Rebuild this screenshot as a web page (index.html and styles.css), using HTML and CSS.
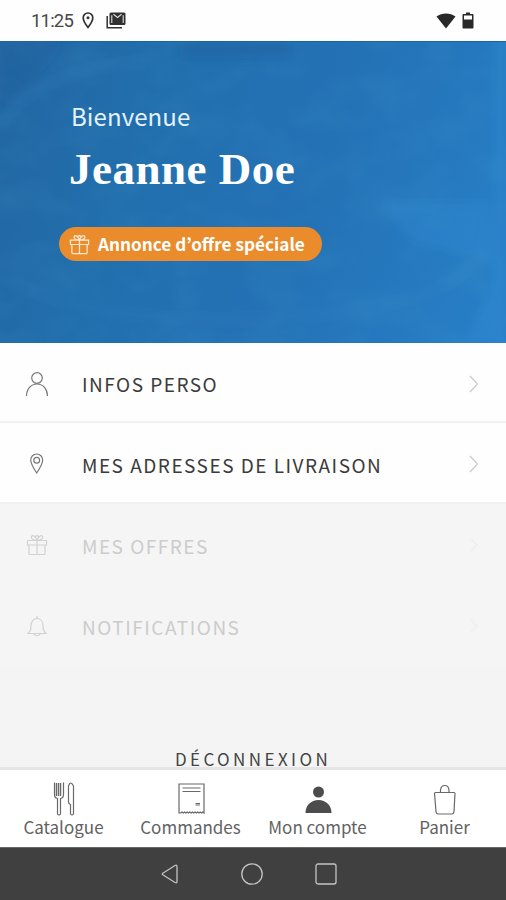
FILE: index.html
```html
<!DOCTYPE html>
<html lang="fr">
<head>
<meta charset="utf-8">
<meta name="viewport" content="width=device-width, initial-scale=1">
<title>Mon compte</title>
<link rel="stylesheet" href="styles.css">
</head>
<body>
<svg class="defs" aria-hidden="true">
  <symbol id="gift" viewBox="0 0 22 22"><path d="M1.500 6.500h19v4.500h-19zM3 11v8.500q0 1 1 1h14q1 0 1-1V11M11 6.500v14M11 6.500C7 6.500 4.500 4.500 5.500 2.500S10 2.500 11 6.500c1-4 4.500-6 5.500-4S15 6.500 11 6.500M8.500 3l2.500-1.500L13.500 3"/></symbol>
  <symbol id="chevron" viewBox="0 0 10 18"><path d="M1 1l7.500 8L1 17"/></symbol>
</svg>
<div class="phone">
  <header class="status">
    <span class="clock">11:25</span>
    <svg class="s-pin" viewBox="0 0 12 17"><path d="M6 1a4.800 4.800 0 0 0-4.800 4.800C1.200 9.400 6 15.500 6 15.500s4.800-6.100 4.800-9.700A4.800 4.800 0 0 0 6 1z"/><circle cx="6" cy="5.800" r="1.500"/></svg>
    <svg class="s-mail" viewBox="0 0 20 17"><path class="line" d="M1.200 4v11.700H16"/><rect x="3.500" y=".5" width="16" height="12.500" rx="1.500"/><path class="cut" d="M5.800 11V3.200M17.200 11V3.200M7.500 2.300l4 3.200 4-3.200"/></svg>
    <svg class="s-wifi" viewBox="0 0 20 16"><path d="M.5 3.500C6-.5 14-.5 19.500 3.500L10 15.500z"/></svg>
    <svg class="s-battery" viewBox="0 0 12 17"><path d="M4 .5h4V2h2.500q1 0 1 1v12.500q0 1-1 1h-9q-1 0-1-1V3q0-1 1-1H4z"/><path class="cut" d="M2 3.500h8V7.500H2z"/></svg>
  </header>

  <section class="hero">
    <svg class="hero-art" viewBox="0 0 506 302" preserveAspectRatio="none" aria-hidden="true">
      <defs>
        <filter id="soft" x="-20%" y="-20%" width="140%" height="140%"><feGaussianBlur stdDeviation="5"/></filter>
        <filter id="grain" x="0" y="0" width="100%" height="100%"><feTurbulence type="fractalNoise" baseFrequency=".02 .028" numOctaves="3" seed="8"/><feColorMatrix values="0 0 0 0 .06  0 0 0 0 .34  0 0 0 0 .58  1.500 0 0 0 -.6"/></filter>
      </defs>
      <rect class="grain" width="506" height="302" filter="url(#grain)"/>
      <g filter="url(#soft)">
        <path class="dark" d="M0 0h65Q45 35 0 65zM180 0h110v16H180z"/>
        <path class="rim" d="M0 85Q35 25 150 20M0 235Q100 290 300 275T490 175"/>
        <path class="glow" d="M380 160h110v60l-80-20zM494 0h12v302h-42l30-60z"/>
      </g>
    </svg>
    <div class="hero-text">
      <p class="welcome">Bienvenue</p>
      <h1 class="name">Jeanne Doe</h1>
      <div class="offer"><svg class="offer-icon"><use href="#gift"/></svg><span>Annonce d’offre spéciale</span></div>
    </div>
  </section>

  <nav class="menu">
    <a class="row">
      <svg class="row-icon" viewBox="0 0 24 26"><circle cx="12" cy="7" r="5.300"/><path d="M1.500 25c0-7 4.500-12 10.500-12s10.500 5 10.500 12"/></svg>
      <span class="label">INFOS PERSO</span><svg class="chevron"><use href="#chevron"/></svg>
    </a>
    <a class="row">
      <svg class="row-icon" viewBox="0 0 24 26"><path d="M11.700 3a6 6 0 0 0-6 6c0 4 6 13 6 13s6-9 6-13a6 6 0 0 0-6-6z"/><circle cx="11.700" cy="9.200" r="2.900"/></svg>
      <span class="label">MES ADRESSES DE LIVRAISON</span><svg class="chevron"><use href="#chevron"/></svg>
    </a>
    <a class="row disabled">
      <svg class="row-icon gift"><use href="#gift"/></svg>
      <span class="label">MES OFFRES</span><svg class="chevron"><use href="#chevron"/></svg>
    </a>
    <a class="row disabled">
      <svg class="row-icon" viewBox="0 0 24 26"><path d="M12 3v2.500M3 20.500c2.500-2 3-4 3-7.500C6 8.500 8.500 5.500 12 5.500s6 3 6 7.500c0 3.500.5 5.500 3 7.500zM9 20.500c.5 3 5.500 3 6 0"/></svg>
      <span class="label">NOTIFICATIONS</span><svg class="chevron"><use href="#chevron"/></svg>
    </a>
  </nav>
  <div class="logout"><span>DÉCONNEXION</span></div>

  <nav class="tabs">
    <a class="tab"><svg viewBox="0 0 28 36"><path class="tines" d="M6.500 2v13M10.500 2v13"/><path d="M4.500 1.500v12q0 3.500 3 4V33q1.500 2 3 0V17.500q3-.5 3-4v-12M8.500 2v13M18.500 5q2-6 5 0v28q-1.500 2-3 0V23.500q-2-.5-2-3z"/></svg><span>Catalogue</span></a>
    <a class="tab"><svg viewBox="0 0 28 36"><path d="M2 3h25v29l-1.200-1-1.300 1-1.300-1-1.300 1-1.300-1-1.300 1-1.300-1-1.300 1-1.300-1-1.300 1-1.300-1-1.300 1-1.300-1-1.300 1-1.300-1-1.300 1-1.300-1-1.300 1L2 32zM5.500 7h18M5.500 10.500h18M18.500 22.500h4.500M18.500 24h4.500"/></svg><span>Commandes</span></a>
    <a class="tab active"><svg viewBox="0 0 28 36"><circle cx="14.500" cy="11" r="5.500"/><path d="M1.500 32c0-7.500 5.500-13 13-13s13 5.500 13 13z"/></svg><span>Mon compte</span></a>
    <a class="tab"><svg viewBox="0 0 28 36"><path d="M4.500 11.500h18.500q1 0 1 1l-1 18q-.2 2.500-2.500 2.500H7.500q-2.300 0-2.500-2.500L3.500 12.500q0-1 1-1zM9.500 11.500V9q.5-4.500 4.300-4.500T18 9v2.500"/></svg><span>Panier</span></a>
  </nav>
  <footer class="system">
    <svg viewBox="0 0 24 24"><path d="M4.800 11.200L17 3.500q2-1 2 1v15q0 2-2 1L4.800 12.800q-1.200-.8 0-1.600z"/></svg>
    <svg viewBox="0 0 24 24"><circle cx="12" cy="12" r="10.200"/></svg>
    <svg viewBox="0 0 24 24"><rect x="2" y="2" width="20" height="20" rx="2"/></svg>
  </footer>
</div>
</body>
</html>
```

FILE: styles.css
```css
* { box-sizing: border-box; }
body { margin: 0; background: #f4f4f4; font-family: "Noto Sans CJK KR", "Noto Sans", sans-serif; }
p, h1 { margin: 0; }
svg { display: block; flex: none; fill: none; }
.defs { position: absolute; width: 0; height: 0; }
.phone { width: 506px; height: 900px; display: flex; flex-direction: column; overflow: hidden; }

.status { height: 41px; flex: none; display: flex; align-items: center; padding: 0 32px 0 31px; background: #fefefe; color: #484848; }
.clock { font: 400 18.500px/24px Roboto, sans-serif; letter-spacing: -.8px; width: 51px; }
.s-pin { width: 12px; height: 17px; stroke: #333; stroke-width: 1.7; }
.s-pin circle { fill: #333; stroke: none; }
.s-mail { width: 20px; height: 17px; margin-left: 12px; fill: #303030; }
.s-mail .line { fill: none; stroke: #303030; stroke-width: 1.5; }
.s-mail .cut { fill: none; stroke: #ddd; stroke-width: 1.1; }
.s-wifi { width: 20px; height: 16px; margin-left: auto; fill: #282828; }
.s-battery { width: 12px; height: 17px; margin-left: 6px; fill: #282828; }
.s-battery .cut { fill: #fff; }

.hero { position: relative; height: 302px; flex: none; background: linear-gradient(110deg, #2266a2 0%, #226fae 30%, #2472b6 60%, #2880c8 100%); color: #fff; border-top: 1px solid #1c65a2; }
.hero-art { position: absolute; inset: 0; width: 100%; height: 100%; }
.grain { opacity: .2; }
.hero-art .dark { fill: #125b98; opacity: .35; }
.hero-art .rim { stroke: #398ac4; stroke-width: 9; opacity: .16; }
.hero-art .glow { fill: #3598df; opacity: .2; }
.hero-text { position: relative; padding: 57px 0 0 59px; }
.welcome { margin-left: 12px; font-size: 24px; line-height: 34px; letter-spacing: .1px; color: #e4f2fc; }
.name { margin: 9px 0 0 10px; font: 700 45px/54px "Liberation Serif", serif; letter-spacing: .5px; white-space: nowrap; }
.offer { display: flex; align-items: center; width: 263px; height: 34px; margin-top: 31px; padding-left: 10px; border-radius: 17px; background: #ea8c2b; font-size: 17.200px; line-height: 34px; font-weight: 700; white-space: nowrap; }
.offer-icon { width: 21px; height: 21px; margin-right: 8px; stroke: #ffe9d2; stroke-width: 1.3; }

.row { display: flex; align-items: center; height: 81px; padding: 3px 27px 0 25px; background: #fefefe; border-bottom: 2px solid #f1f1f1; color: #3b3b3b; }
.row:first-child { height: 80px; }
.row-icon { width: 24px; height: 26px; stroke: #777; stroke-width: 1.2; }
.row-icon.gift { height: 22px; }
.label { margin-left: 33px; padding-top: 1px; font-size: 19px; line-height: 28px; letter-spacing: 1.500px; white-space: nowrap; }
.chevron { width: 10px; height: 18px; margin-left: auto; stroke: #ccc; stroke-width: 1.3; }
.row.disabled { background: #f5f5f5; border-color: #f5f5f5; color: #ccc; }
.disabled .row-icon { stroke: #d2d2d2; }
.disabled .chevron { height: 14px; stroke: #ececec; }

.logout { flex: 1; display: flex; align-items: flex-end; justify-content: center; background: #f4f4f4; border-bottom: 3px solid #e5e5e5; color: #444; font-size: 17px; line-height: 17px; letter-spacing: 3.400px; }
.tabs { flex: none; height: 77px; display: grid; grid-template-columns: repeat(4, 127px); background: #fff; }
.tab { display: flex; flex-direction: column; align-items: center; padding-top: 11px; font-size: 17px; line-height: 20px; color: #626262; white-space: nowrap; }
.tab svg { width: 28px; height: 36px; stroke: #696969; stroke-width: 1.2; }
.tab .tines { stroke-width: 1.5; }
.tab.active svg { fill: #4c4c4c; stroke: none; }
.system { flex: none; height: 53px; display: flex; align-items: center; gap: 58px; padding-left: 158px; background: #404040; border-top: 1px solid #666; }
.system svg { width: 24px; height: 24px; stroke: #c4c4c4; stroke-width: 1.3; }
.system svg:nth-child(3) { margin-left: -8px; }
```
